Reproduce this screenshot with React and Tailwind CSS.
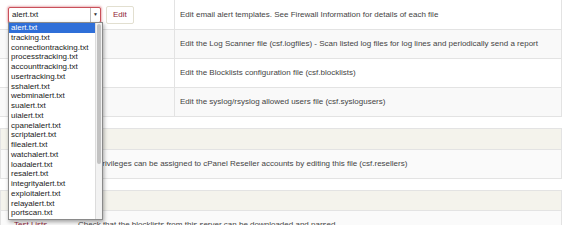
import React from "react";

const files = [
  "alert.txt",
  "tracking.txt",
  "connectiontracking.txt",
  "processtracking.txt",
  "accounttracking.txt",
  "usertracking.txt",
  "sshalert.txt",
  "webminalert.txt",
  "sualert.txt",
  "uialert.txt",
  "cpanelalert.txt",
  "scriptalert.txt",
  "filealert.txt",
  "watchalert.txt",
  "loadalert.txt",
  "resalert.txt",
  "integrityalert.txt",
  "exploitalert.txt",
  "relayalert.txt",
  "portscan.txt",
];

const rows = [
  "Edit the Log Scanner file (csf.logfiles) - Scan listed log files for log lines and periodically send a report",
  "Edit the Blocklists configuration file (csf.blocklists)",
  "Edit the syslog/rsyslog allowed users file (csf.syslogusers)",
];

function EditButton({ label }) {
  return (
    <button className="h-[18px] px-[6px] bg-white border border-[#e2dfd0] rounded-[2px] text-[8px] text-[#8f2535] leading-none">
      {label}
    </button>
  );
}

export default function App() {
  return (
    <div
      className="relative w-[570px] h-[225px] overflow-hidden bg-white text-[#444]"
      style={{ fontFamily: '"Liberation Sans", Arial, sans-serif' }}
    >
      {/* Main table */}
      <div className="w-[562px] border-r border-[#e3e3e3]">
        <div className="flex h-[30px] border-b border-[#e3e3e3] bg-white">
          <div className="w-[175px] flex items-center gap-[5px] pl-[8px] border-r border-[#e3e3e3]">
            <div className="w-[93px] h-[16px] flex items-center border border-[#c9505a] rounded-[2px] shadow-[0_0_2px_1px_rgba(210,90,100,0.45)] bg-white">
              <span className="flex-1 pl-[3px] text-[8px] text-[#222]">alert.txt</span>
              <span className="w-[10px] h-full flex items-center justify-center border-l border-[#bbb] text-[5px] text-[#333]">▼</span>
            </div>
            <EditButton label="Edit" />
          </div>
          <div className="flex-1 flex items-center pl-[5px] text-[8px]">
            Edit email alert templates. See Firewall Information for details of each file
          </div>
        </div>
        {rows.map((text, i) => (
          <div
            key={i}
            className={`flex h-[29px] border-b border-[#e3e3e3] ${i % 2 === 0 ? "bg-[#f9f9f9]" : "bg-white"}`}
          >
            <div className="w-[175px] border-r border-[#e3e3e3]" />
            <div className="flex-1 flex items-center pl-[5px] text-[8px]">{text}</div>
          </div>
        ))}
      </div>

      {/* Reseller panel */}
      <div className="mt-[11px] w-[562px] border border-[#e3e3e3]">
        <div className="h-[21px] bg-[#f4f3ec] border-b border-[#e3e3e3]" />
        <div className="h-[28px] flex items-center bg-[#fafafa]">
          <div className="w-[91px]" />
          <div className="pl-[5px] text-[8px]">
            Privileges can be assigned to cPanel Reseller accounts by editing this file (csf.resellers)
          </div>
        </div>
      </div>

      {/* Next panel */}
      <div className="mt-[11px] w-[562px] border border-[#e3e3e3]">
        <div className="h-[20px] bg-[#f4f3ec] border-b border-[#e3e3e3]" />
        <div className="h-[28px] flex items-start pt-[8px] bg-[#fafafa]">
          <div className="w-[72px] pl-[13px] text-[8px] text-[#8f2535]">Test Lists</div>
          <div className="pl-[5px] text-[8px]">
            Check that the blocklists from this server can be downloaded and parsed
          </div>
        </div>
      </div>

      {/* Open dropdown list */}
      <div className="absolute left-[8px] top-[22px] w-[95px] h-[198px] bg-white border border-[#8a8a8a] shadow-[1px_2px_4px_rgba(0,0,0,0.35)] flex">
        <div className="flex-1 overflow-hidden">
          {files.map((f, i) => (
            <div
              key={f}
              className={`h-[9.75px] leading-[9.75px] pl-[2px] text-[8px] ${i === 0 ? "bg-[#2f6fd8] text-white" : "text-[#222]"}`}
            >
              {f}
            </div>
          ))}
        </div>
        <div className="w-[7px] bg-[#f2f2f2] border-l border-[#dcdcdc] pt-[1px] px-[1px]">
          <div className="h-[140px] rounded-full bg-[#c2c2c2]" />
        </div>
      </div>
    </div>
  );
}
